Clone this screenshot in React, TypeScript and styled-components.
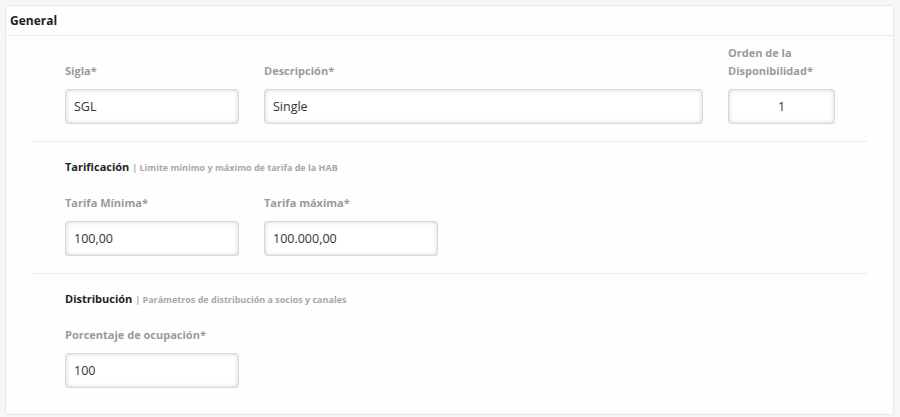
import React from "react";
import styled, { createGlobalStyle } from "styled-components";

const GlobalStyle = createGlobalStyle`
    html, body {
        margin: 0;
        padding: 0;
        background-color: #f6f6f6;
        font-family: "Open Sans", "Noto Sans", Arial, sans-serif;
    }
`;

const Page = styled.div`
    padding: 5px 6px 3px 5px;
`;

const Card = styled.div`
    background-color: #fefefe;
    border: 1px solid #e6e6e6;
    border-radius: 3px;
`;

const CardHeader = styled.div`
    height: 29px;
    display: flex;
    align-items: center;
    padding: 0 4px;
    border-bottom: 1px solid #ececec;
    font-size: 12px;
    font-weight: 700;
    color: #222;
`;

const CardBody = styled.div`
    padding: 8px 25px 26px 24px;
`;

const Section = styled.div<{ $divider?: boolean }>`
    padding: 0 0 0 35px;
    border-bottom: ${(p) => (p.$divider ? "1px solid #ececec" : "none")};
    padding-bottom: ${(p) => (p.$divider ? "17px" : "0")};
    margin-bottom: ${(p) => (p.$divider ? "17px" : "0")};
`;

const SectionTitle = styled.div`
    font-size: 11px;
    line-height: 16px;
    font-weight: 700;
    color: #222;
    margin-bottom: 18px;
    span {
        font-size: 9px;
        color: #a8a8a8;
    }
`;

const Row = styled.div`
    display: flex;
    align-items: flex-end;
    gap: 25px;
`;

const Field = styled.div<{ $width: number }>`
    width: ${(p) => p.$width}px;
    display: flex;
    flex-direction: column;
`;

const Label = styled.label`
    font-size: 11px;
    line-height: 18px;
    font-weight: 700;
    color: #9a9a9a;
    margin-bottom: 9px;
`;

const Input = styled.input<{ $center?: boolean }>`
    box-sizing: border-box;
    width: 100%;
    height: 35px;
    padding: 0 8px;
    border: 1px solid #d8d8d8;
    border-radius: 3px;
    background-color: #fff;
    box-shadow: inset 0 0 4px rgba(0, 0, 0, 0.18);
    font-family: "Open Sans", "Noto Sans", Arial, sans-serif;
    font-size: 12.5px;
    color: #333;
    text-align: ${(p) => (p.$center ? "center" : "left")};
    outline: none;
`;

const App: React.FunctionComponent = () => {
    return (
        <Page>
            <GlobalStyle />
            <Card>
                <CardHeader>General</CardHeader>
                <CardBody>
                    <Section $divider>
                        <Row>
                            <Field $width={174}>
                                <Label>Sigla*</Label>
                                <Input defaultValue="SGL" />
                            </Field>
                            <Field $width={439}>
                                <Label>Descripción*</Label>
                                <Input defaultValue="Single" />
                            </Field>
                            <Field $width={107}>
                                <Label>
                                    Orden de la
                                    <br />
                                    Disponibilidad*
                                </Label>
                                <Input defaultValue="1" $center />
                            </Field>
                        </Row>
                    </Section>
                    <Section $divider>
                        <SectionTitle>
                            Tarificación <span>| Limite mínimo y máximo de tarifa de la HAB</span>
                        </SectionTitle>
                        <Row>
                            <Field $width={174}>
                                <Label>Tarifa Mínima*</Label>
                                <Input defaultValue="100,00" />
                            </Field>
                            <Field $width={174}>
                                <Label>Tarifa máxima*</Label>
                                <Input defaultValue="100.000,00" />
                            </Field>
                        </Row>
                    </Section>
                    <Section>
                        <SectionTitle>
                            Distribución <span>| Parámetros de distribución a socios y canales</span>
                        </SectionTitle>
                        <Row>
                            <Field $width={174}>
                                <Label>Porcentaje de ocupación*</Label>
                                <Input defaultValue="100" />
                            </Field>
                        </Row>
                    </Section>
                </CardBody>
            </Card>
        </Page>
    );
};

export default App;
